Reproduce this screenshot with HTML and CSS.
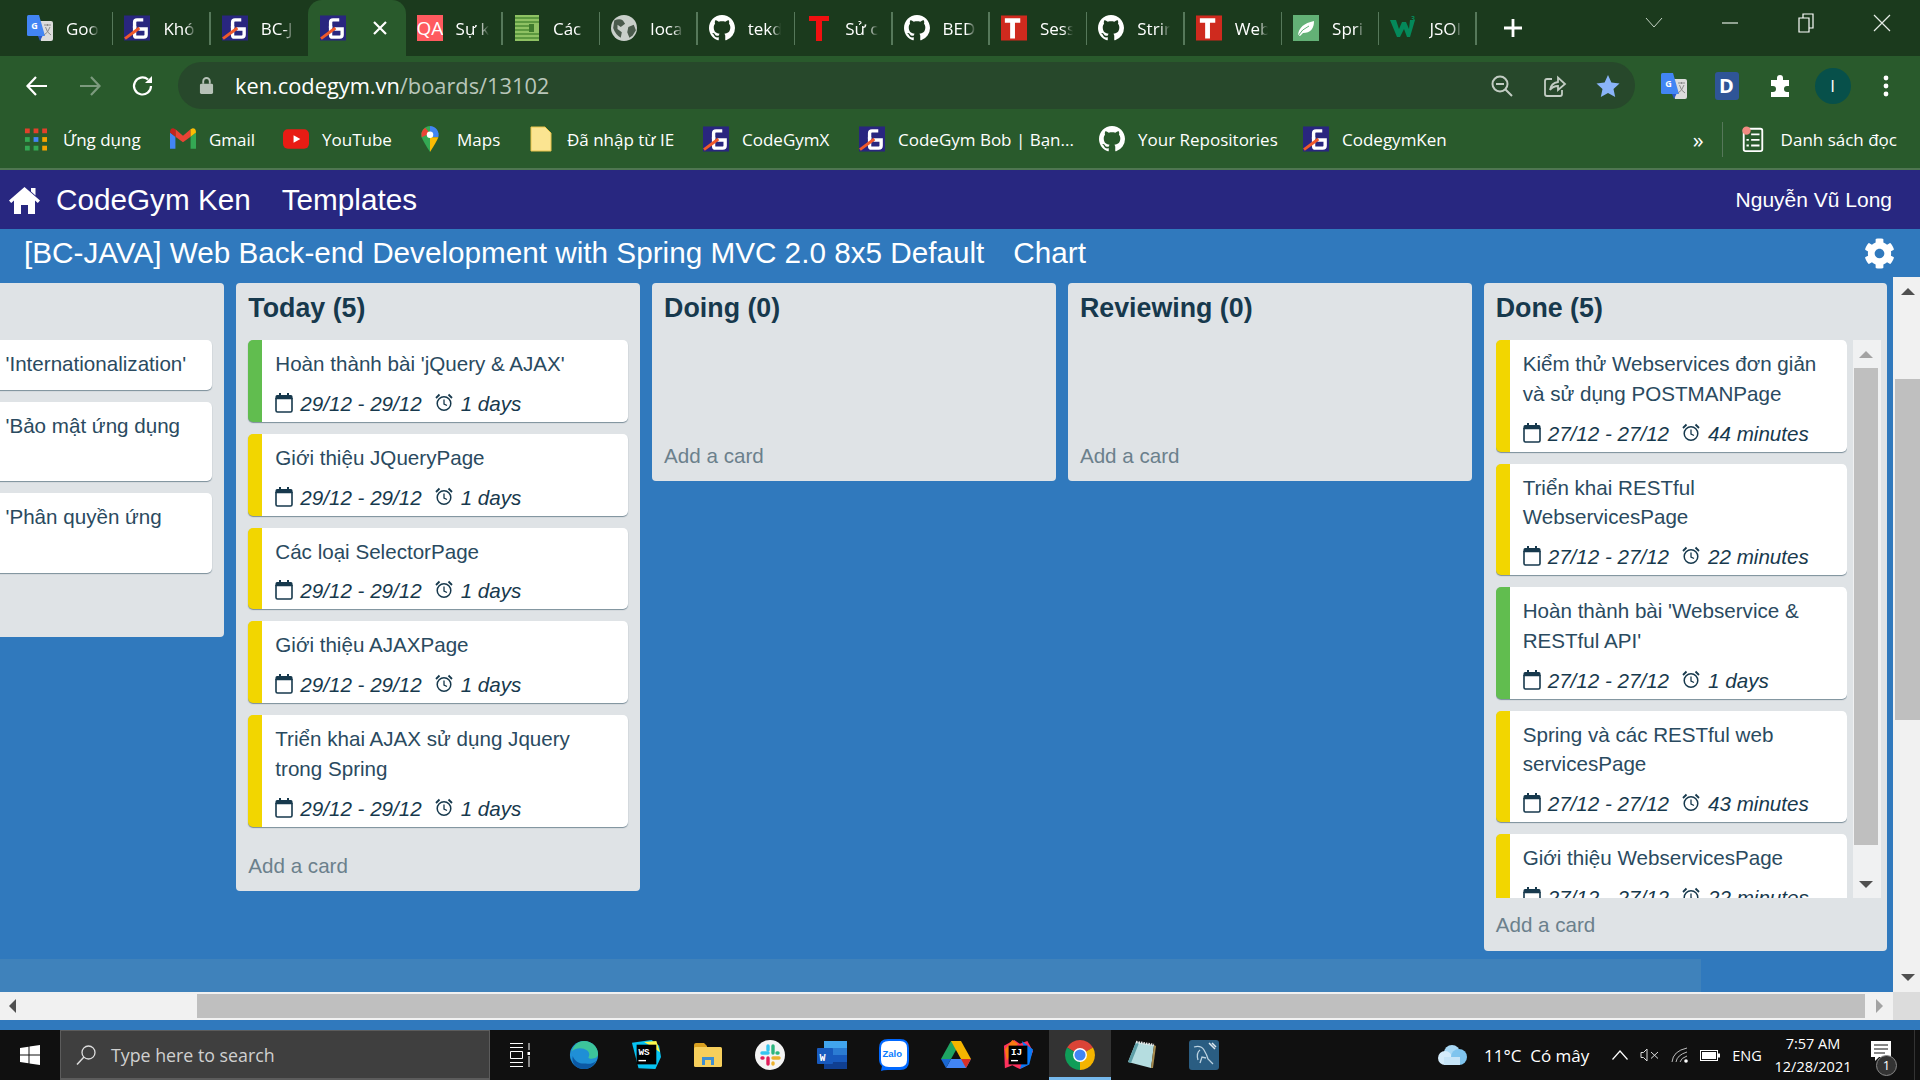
FILE: index.html
```html
<!doctype html>
<html>
<head>
	<meta charset="utf-8">
	<title>CodeGym Ken</title>
	<link rel="stylesheet" href="styles.css">
</head>
<body>
<svg class="defs" xmlns="http://www.w3.org/2000/svg">
	<symbol id="i-cg" viewBox="0 0 27 26">
		<rect width="27" height="26" fill="#29267f"/>
		<path d="M20 4.5H13.5Q11 4.500 11 7V13" fill="none" stroke="#fff" stroke-width="3.500"/>
		<path d="M11 11V20.500Q11 22.500 13 22.500H20.500Q23 22.500 23 20V14H15" fill="none" stroke="#fff" stroke-width="3.500"/>
		<path d="M1 24L16 13" stroke="#f0592a" stroke-width="3"/>
	</symbol>
	<symbol id="i-gh" viewBox="0 0 16 16">
		<path fill="#fff" d="M8 0C3.58 0 0 3.58 0 8c0 3.54 2.29 6.53 5.47 7.59.4.07.55-.17.55-.38 0-.19-.01-.82-.01-1.49-2.01.37-2.53-.49-2.69-.94-.09-.23-.48-.94-.82-1.13-.28-.15-.68-.52-.01-.53.63-.01 1.08.58 1.23.82.72 1.21 1.87.87 2.33.66.07-.52.28-.87.51-1.07-1.78-.2-3.64-.89-3.64-3.95 0-.87.31-1.59.82-2.15-.08-.2-.36-1.02.08-2.12 0 0 .67-.21 2.2.82.64-.18 1.32-.27 2-.27.68 0 1.36.09 2 .27 1.53-1.04 2.2-.82 2.2-.82.44 1.1.16 1.92.08 2.12.51.56.82 1.27.82 2.15 0 3.07-1.87 3.75-3.65 3.95.29.25.54.73.54 1.48 0 1.07-.01 1.93-.01 2.2 0 .21.15.46.55.38A8.013 8.013 0 0016 8c0-4.42-3.58-8-8-8z"/>
	</symbol>
	<symbol id="i-translate" viewBox="0 0 26 26">
		<path d="M9 6H24Q26 6 26 8V24Q26 26 24 26H14Z" fill="#dcdcdc"/>
		<path d="M1.500 0H12L18 21H1.500Q0 21 0 19.500V1.500Q0 0 1.500 0Z" fill="#4285f4"/>
		<path d="M11 21H15.500L13 26Z" fill="#2a56c6"/>
		<text x="7.500" y="14" class="glyph-g" fill="#fff">G</text>
		<path d="M17 10H24M20.500 9V11M18.500 12Q20 18 24 20M23 12Q21 18 17 20" fill="none" stroke="#8a8a8a" stroke-width="1"/>
	</symbol>
	<symbol id="i-globe" viewBox="0 0 24 24">
		<circle cx="12" cy="12" r="12" fill="#c9cfca"/>
		<path d="M3 5Q8 3 11 5L13 8 9 11 6 9 6 13 10 16 9 21Q4 18 2 12ZM16 11L21 9 23 14 20 19 17 21 15 16Z" fill="#4a5a4c"/>
	</symbol>
	<symbol id="i-t" viewBox="0 0 27 26">
		<rect width="27" height="26" fill="#cf2a1e"/>
		<path d="M4 3H20V7.500H14.500V24H9.500V7.500H4Z" fill="#fff"/>
	</symbol>
	<symbol id="i-home" viewBox="0 0 31 27">
		<path fill="#fff" d="M15.500 0L31 13.500 28.800 16 26 13.600V27H19V18H12V27H5V13.600L2.200 16 0 13.500ZM22 1H26.500V8.500L22 4.600Z"/>
	</symbol>
	<symbol id="i-gear" viewBox="0 0 512 512">
		<path fill="#fff" d="M487.400 315.700l-42.600-24.600c4.300-23.200 4.300-47 0-70.200l42.600-24.600c4.900-2.800 7.100-8.600 5.500-14-11.100-35.600-30-67.800-54.700-94.600-3.800-4.100-10-5.100-14.800-2.300L380.800 110c-17.900-15.400-38.500-27.300-60.800-35.100V25.800c0-5.600-3.900-10.500-9.400-11.700-36.700-8.200-74.300-7.800-109.200 0-5.500 1.200-9.400 6.100-9.400 11.700V75c-22.200 7.900-42.800 19.800-60.800 35.100L88.700 85.500c-4.900-2.800-11-1.900-14.800 2.300-24.700 26.700-43.600 58.900-54.700 94.600-1.700 5.400.6 11.200 5.500 14L67.300 221c-4.300 23.200-4.300 47 0 70.200l-42.600 24.600c-4.900 2.800-7.100 8.600-5.500 14 11.100 35.600 30 67.800 54.700 94.600 3.800 4.100 10 5.100 14.800 2.300l42.600-24.600c17.900 15.400 38.500 27.300 60.800 35.100v49.200c0 5.600 3.900 10.500 9.400 11.700 36.700 8.200 74.300 7.800 109.200 0 5.500-1.200 9.400-6.100 9.400-11.700v-49.200c22.200-7.900 42.800-19.800 60.800-35.100l42.600 24.600c4.900 2.800 11 1.900 14.800-2.300 24.700-26.700 43.600-58.900 54.700-94.600 1.500-5.500-.7-11.300-5.600-14.100zM256 336c-44.100 0-80-35.900-80-80s35.900-80 80-80 80 35.900 80 80-35.900 80-80 80z"/>
	</symbol>
	<symbol id="i-cal" viewBox="0 0 18 20">
		<path d="M1 5.500H17V17.500Q17 19 15.500 19H2.500Q1 19 1 17.500Z" fill="none" stroke="#17394d" stroke-width="1.600"/>
		<path d="M0.500 3.500Q0.500 2 2 2H4V0H6V2H12V0H14V2H16Q17.500 2 17.500 3.500V6H0.500Z" fill="#17394d"/>
	</symbol>
	<symbol id="i-clock" viewBox="0 0 18 19">
		<circle cx="9" cy="10.500" r="6.800" fill="none" stroke="#17394d" stroke-width="1.500"/>
		<path d="M9 6.500V11L12 12.500" fill="none" stroke="#17394d" stroke-width="1.300"/>
		<path d="M1 5L4.500 1.500M17 5L13.500 1.500" stroke="#17394d" stroke-width="1.800"/>
	</symbol>
	<symbol id="i-chrome" viewBox="0 0 28 28">
		<path d="M14 14L26.100 7A14 14 0 0 0 1.900 7Z" fill="#db4437"/>
		<path d="M14 14L1.900 7A14 14 0 0 0 14 28Z" fill="#0f9d58"/>
		<path d="M14 14L14 28A14 14 0 0 0 26.100 7Z" fill="#f4b400"/>
		<circle cx="14" cy="14" r="6.500" fill="#fff"/>
		<circle cx="14" cy="14" r="5.200" fill="#4285f4"/>
	</symbol>
</svg>

<div class="chrome">
	<div class="tabs">
		<div class="tab"><svg class="fav"><use href="#i-translate"/></svg><span class="tab-label">Goo</span></div>
		<div class="tab"><svg class="fav"><use href="#i-cg"/></svg><span class="tab-label">Khó</span></div>
		<div class="tab tab-before-active"><svg class="fav"><use href="#i-cg"/></svg><span class="tab-label">BC-J</span></div>
		<div class="tab tab-active"><svg class="fav"><use href="#i-cg"/></svg>
			<svg class="tab-close" viewBox="0 0 14 14"><path d="M1 1L13 13M13 1L1 13" stroke="#fff" stroke-width="2.200"/></svg>
		</div>
		<div class="tab"><span class="fav fav-qa">QA</span><span class="tab-label">Sự k</span></div>
		<div class="tab"><svg class="fav" viewBox="0 0 24 26"><rect width="24" height="26" fill="#8fc163"/><path d="M0 3H24M0 7H24M0 11H14M0 15H14M0 19H24M0 23H24" stroke="#4c8a35" stroke-width="1.500"/><path d="M14 9H19V17H14Z" fill="#3f7a2d"/></svg><span class="tab-label">Các</span></div>
		<div class="tab"><svg class="fav"><use href="#i-globe"/></svg><span class="tab-label">loca</span></div>
		<div class="tab"><svg class="fav"><use href="#i-gh"/></svg><span class="tab-label">tekd</span></div>
		<div class="tab"><svg class="fav" viewBox="0 0 26 26"><path d="M3 1H23V6H16V26H10V6H3Z" fill="#f01010"/></svg><span class="tab-label">Sử c</span></div>
		<div class="tab"><svg class="fav"><use href="#i-gh"/></svg><span class="tab-label">BED</span></div>
		<div class="tab"><svg class="fav"><use href="#i-t"/></svg><span class="tab-label">Sess</span></div>
		<div class="tab"><svg class="fav"><use href="#i-gh"/></svg><span class="tab-label">Strir</span></div>
		<div class="tab"><svg class="fav"><use href="#i-t"/></svg><span class="tab-label">Web</span></div>
		<div class="tab"><svg class="fav" viewBox="0 0 26 26"><rect width="26" height="26" fill="#63b176"/><path d="M5 20Q6 9 21 6Q21 18 10 18L7 21Z" fill="#fff"/><path d="M5 21Q9 14 16 11" stroke="#63b176" stroke-width="1" fill="none"/></svg><span class="tab-label">Spri</span></div>
		<div class="tab"><svg class="fav" viewBox="0 0 26 26"><path d="M0 5H6L9 14 12 7H16L19 14 20 5H25L20 22H17L14 14 10 22H7Z" fill="#04895a"/><text x="21" y="6" class="glyph-sup" fill="#04895a">3</text></svg><span class="tab-label">JSOI</span></div>
		<svg class="tab-plus" viewBox="0 0 20 20"><path d="M10 1V19M1 10H19" stroke="#fff" stroke-width="2.800"/></svg>
		<div class="win-controls">
			<svg viewBox="0 0 18 20"><path d="M1 5L9 14 17 5" fill="none" stroke="#c4d2c4" stroke-width="1"/></svg>
			<svg viewBox="0 0 18 20"><path d="M1 10H17" stroke="#e0e8e0" stroke-width="1.200"/></svg>
			<svg viewBox="0 0 18 20"><path d="M2 5H12V19H2ZM6 5V1H16V15H12" fill="none" stroke="#fff" stroke-width="1.200"/></svg>
			<svg viewBox="0 0 18 20"><path d="M1 2L17 18M17 2L1 18" stroke="#e6ece6" stroke-width="1.200"/></svg>
		</div>
	</div>

	<div class="toolbar">
		<span class="tool"><svg viewBox="0 0 24 24" class="tool-ico"><path d="M22 12H3M11 3L2.500 12 11 21" fill="none" stroke="#fff" stroke-width="2.200"/></svg></span>
		<span class="tool"><svg viewBox="0 0 24 24" class="tool-ico"><path d="M2 12H21M13 3L21.500 12 13 21" fill="none" stroke="#7c9a7e" stroke-width="2.200"/></svg></span>
		<span class="tool"><svg viewBox="0 0 24 24" class="tool-ico"><path d="M20 12A8.500 8.500 0 1 1 17 5.500" fill="none" stroke="#fff" stroke-width="2.200"/><path d="M21 2V9H14Z" fill="#fff"/></svg></span>
		<div class="omnibox">
			<svg class="lock" viewBox="0 0 16 20"><path d="M4.500 8V5.500a3.500 3.500 0 0 1 7 0V8" fill="none" stroke="#b7c2b8" stroke-width="2"/><rect x="1" y="8" width="14" height="11" rx="1.500" fill="#b7c2b8"/></svg>
			<span class="url">ken.codegym.vn<span class="url-path">/boards/13102</span></span>
			<div class="omni-tools">
				<span class="tool"><svg viewBox="0 0 24 24" class="tool-ico"><circle cx="10" cy="10" r="7.500" fill="none" stroke="#c2ccc3" stroke-width="2"/><path d="M6 10H14M15.500 15.500L22 22" stroke="#c2ccc3" stroke-width="2" fill="none"/></svg></span>
				<span class="tool"><svg viewBox="0 0 24 24" class="tool-ico"><path d="M9 5H4Q2 5 2 7V20Q2 22 4 22H17Q19 22 19 20V16" fill="none" stroke="#c2ccc3" stroke-width="1.800"/><path d="M7 16Q8 9 15 8V3.500L22 10 15 16V12Q10 12 7 16Z" fill="none" stroke="#c2ccc3" stroke-width="1.800"/></svg></span>
				<span class="tool"><svg viewBox="0 0 24 24" class="tool-ico"><path d="M12 1L15.400 8.500 23.500 9.500 17.500 15 19.200 23 12 19 4.800 23 6.500 15 .5 9.500 8.600 8.500Z" fill="#8ab4f8"/></svg></span>
			</div>
		</div>
		<span class="tool tool-first"><svg class="tool-ext"><use href="#i-translate"/></svg></span>
		<span class="tool"><span class="ext-d">D</span></span>
		<span class="tool"><svg viewBox="0 0 24 24" class="tool-ico"><path d="M9 4a3 3 0 0 1 6 0V6H21V12H19a3 3 0 0 0 0 6H21V23H3V18H5a3 3 0 0 0 0-6H3V6H9Z" fill="#fff"/></svg></span>
		<span class="tool"><span class="avatar">I</span></span>
		<span class="tool"><svg viewBox="0 0 6 24" class="tool-dots"><circle cx="3" cy="4" r="2.400" fill="#fff"/><circle cx="3" cy="12" r="2.400" fill="#fff"/><circle cx="3" cy="20" r="2.400" fill="#fff"/></svg></span>
	</div>

	<div class="bookmarks">
		<div class="bm-list">
			<a class="bm"><svg class="bm-ico bm-ico-apps" viewBox="0 0 24 24"><path d="M1 1H6V6H1ZM10 1H15V6H10ZM19 1H24V6H19Z" fill="#e2402b"/><path d="M1 10H6V15H1Z" fill="#34a853"/><path d="M10 10H15V15H10Z" fill="#4285f4"/><path d="M19 10H24V15H19Z" fill="#f4a300"/><path d="M1 19H6V24H1ZM10 19H15V24H10Z" fill="#34a853"/><path d="M19 19H24V24H19Z" fill="#f4a300"/></svg>Ứng dụng</a>
			<a class="bm"><svg class="bm-ico" viewBox="0 0 24 20"><path d="M0 4V19H5V8Z" fill="#4285f4"/><path d="M19 8V19H24V4Z" fill="#34a853"/><path d="M5 8L12 13 19 8V1L12 7 5 1Z" fill="#ea4335"/><path d="M0 4L5 8V1L3 0Q0 0 0 4Z" fill="#c5221f"/><path d="M24 4L19 8V1L21 0Q24 0 24 4Z" fill="#fbbc04"/></svg>Gmail</a>
			<a class="bm"><svg class="bm-ico" viewBox="0 0 27 20"><rect width="27" height="20" rx="5" fill="#e81c14"/><path d="M11 6L18 10 11 14Z" fill="#fff"/></svg>YouTube</a>
			<a class="bm"><svg class="bm-ico bm-ico-map" viewBox="0 0 20 28"><path d="M10 28Q3 17 1 12A9.500 9.500 0 0 1 10 0Z" fill="#34a853"/><path d="M10 0A9.500 9.500 0 0 1 19 12L10 12Z" fill="#4285f4"/><path d="M10 28Q17 17 19 12L10 12Z" fill="#fbbc04"/><path d="M1 12A9.500 9.500 0 0 1 5 2L10 8Z" fill="#ea4335"/><circle cx="10" cy="9.500" r="3.500" fill="#fff"/></svg>Maps</a>
			<a class="bm"><svg class="bm-ico" viewBox="0 0 22 26"><path d="M1 1H15L21 7V25H1Z" fill="#fbe491" stroke="#e9c34b" stroke-width="1"/></svg>Đã nhập từ IE</a>
			<a class="bm"><svg class="bm-ico"><use href="#i-cg"/></svg>CodeGymX</a>
			<a class="bm"><svg class="bm-ico"><use href="#i-cg"/></svg>CodeGym Bob | Bạn...</a>
			<a class="bm"><svg class="bm-ico"><use href="#i-gh"/></svg>Your Repositories</a>
			<a class="bm"><svg class="bm-ico"><use href="#i-cg"/></svg>CodegymKen</a>
		</div>
		<span class="bm-more">»</span>
		<a class="bm bm-reading"><svg class="bm-ico" viewBox="0 0 24 28"><rect x="2" y="3" width="20" height="24" rx="2" fill="none" stroke="#fff" stroke-width="2"/><path d="M10 9H19M10 15H19M10 21H19M5 15H7.500M5 21H7.500" stroke="#fff" stroke-width="2"/><circle cx="5" cy="5" r="4.500" fill="#f28b82"/></svg>Danh sách đọc</a>
	</div>
</div>

<nav class="topnav">
	<svg class="home-ico"><use href="#i-home"/></svg>
	<a class="topnav-link">CodeGym Ken</a>
	<a class="topnav-link">Templates</a>
	<span class="topnav-user">Nguyễn Vũ Long</span>
</nav>

<div class="board">
	<header class="board-head">
		<h1 class="board-title">[BC-JAVA] Web Back-end Development with Spring MVC 2.0 8x5 Default</h1>
		<a class="board-chart">Chart</a>
		<svg class="gear"><use href="#i-gear"/></svg>
	</header>

	<div class="board-body">
		<div class="board-main">
			<div class="lists">
				<section class="list">
					<div class="list-title"></div>
					<div class="cards">
						<article class="card card-plain"><p class="card-title">'Internationalization'</p></article>
						<article class="card card-plain card-tall"><p class="card-title">'Bảo mật ứng dụng</p></article>
						<article class="card card-plain card-tall"><p class="card-title">'Phân quyền ứng</p></article>
					</div>
					<div class="add-card"></div>
				</section>

				<section class="list">
					<h2 class="list-title">Today (5)</h2>
					<div class="cards">
						<article class="card card-green">
							<p class="card-title">Hoàn thành bài 'jQuery &amp; AJAX'</p>
							<div class="card-meta"><svg class="ico-cal"><use href="#i-cal"/></svg><span>29/12 - 29/12</span><svg class="ico-clock"><use href="#i-clock"/></svg><span>1 days</span></div>
						</article>
						<article class="card">
							<p class="card-title">Giới thiệu JQueryPage</p>
							<div class="card-meta"><svg class="ico-cal"><use href="#i-cal"/></svg><span>29/12 - 29/12</span><svg class="ico-clock"><use href="#i-clock"/></svg><span>1 days</span></div>
						</article>
						<article class="card">
							<p class="card-title">Các loại SelectorPage</p>
							<div class="card-meta"><svg class="ico-cal"><use href="#i-cal"/></svg><span>29/12 - 29/12</span><svg class="ico-clock"><use href="#i-clock"/></svg><span>1 days</span></div>
						</article>
						<article class="card">
							<p class="card-title">Giới thiệu AJAXPage</p>
							<div class="card-meta"><svg class="ico-cal"><use href="#i-cal"/></svg><span>29/12 - 29/12</span><svg class="ico-clock"><use href="#i-clock"/></svg><span>1 days</span></div>
						</article>
						<article class="card">
							<p class="card-title">Triển khai AJAX sử dụng Jquery trong Spring</p>
							<div class="card-meta"><svg class="ico-cal"><use href="#i-cal"/></svg><span>29/12 - 29/12</span><svg class="ico-clock"><use href="#i-clock"/></svg><span>1 days</span></div>
						</article>
					</div>
					<div class="add-card">Add a card</div>
				</section>

				<section class="list">
					<h2 class="list-title">Doing (0)</h2>
					<div class="cards cards-empty"></div>
					<div class="add-card">Add a card</div>
				</section>

				<section class="list">
					<h2 class="list-title">Reviewing (0)</h2>
					<div class="cards cards-empty"></div>
					<div class="add-card">Add a card</div>
				</section>

				<section class="list">
					<h2 class="list-title">Done (5)</h2>
					<div class="list-scroll">
						<div class="cards cards-clip">
							<article class="card">
								<p class="card-title">Kiểm thử Webservices đơn giản và sử dụng POSTMANPage</p>
								<div class="card-meta"><svg class="ico-cal"><use href="#i-cal"/></svg><span>27/12 - 27/12</span><svg class="ico-clock"><use href="#i-clock"/></svg><span>44 minutes</span></div>
							</article>
							<article class="card">
								<p class="card-title">Triển khai RESTful WebservicesPage</p>
								<div class="card-meta"><svg class="ico-cal"><use href="#i-cal"/></svg><span>27/12 - 27/12</span><svg class="ico-clock"><use href="#i-clock"/></svg><span>22 minutes</span></div>
							</article>
							<article class="card card-green">
								<p class="card-title">Hoàn thành bài 'Webservice &amp; RESTful API'</p>
								<div class="card-meta"><svg class="ico-cal"><use href="#i-cal"/></svg><span>27/12 - 27/12</span><svg class="ico-clock"><use href="#i-clock"/></svg><span>1 days</span></div>
							</article>
							<article class="card">
								<p class="card-title">Spring và các RESTful web servicesPage</p>
								<div class="card-meta"><svg class="ico-cal"><use href="#i-cal"/></svg><span>27/12 - 27/12</span><svg class="ico-clock"><use href="#i-clock"/></svg><span>43 minutes</span></div>
							</article>
							<article class="card">
								<p class="card-title">Giới thiệu WebservicesPage</p>
								<div class="card-meta"><svg class="ico-cal"><use href="#i-cal"/></svg><span>27/12 - 27/12</span><svg class="ico-clock"><use href="#i-clock"/></svg><span>22 minutes</span></div>
							</article>
						</div>
						<div class="list-bar">
							<span class="arrow arrow-up arrow-dim"></span>
							<span class="list-thumb"></span>
							<span class="arrow arrow-down"></span>
						</div>
					</div>
					<div class="add-card">Add a card</div>
				</section>
			</div>
			<div class="board-strip"></div>
		</div>
		<div class="page-bar">
			<span class="arrow arrow-up"></span>
			<span class="page-thumb"></span>
			<span class="arrow arrow-down"></span>
		</div>
	</div>

	<div class="hbar">
		<span class="arrow arrow-left"></span>
		<span class="hbar-thumb"></span>
		<span class="arrow arrow-right"></span>
		<span class="hbar-corner"></span>
	</div>
</div>

<footer class="taskbar">
	<span class="start"><svg viewBox="0 0 20 20" class="start-ico"><path d="M0 3L8.500 1.800V9.500H0ZM9.500 1.600L20 0V9.500H9.500ZM0 10.500H8.500V18.200L0 17ZM9.500 10.500H20V20L9.500 18.400Z" fill="#fff"/></svg></span>
	<div class="search"><svg viewBox="0 0 20 20" class="search-ico"><circle cx="12.500" cy="7.500" r="6.500" fill="none" stroke="#ddd" stroke-width="1.300"/><path d="M8 12L1 19.500" stroke="#ddd" stroke-width="1.500"/></svg><span>Type here to search</span></div>
	<span class="task-view"><svg viewBox="0 0 20 24" class="task-view-ico"><path d="M0 .5H13M0 4.500H13M0 19.500H13M0 23.500H13M.5 8.500H12.500V15.500H.5Z M19 0V7M19 13V24" fill="none" stroke="#fff" stroke-width="1"/><rect x="17.500" y="9" width="3" height="3" fill="#fff"/></svg></span>
	<div class="task-apps">
		<span class="app"><svg viewBox="0 0 32 32" class="app-ico"><circle cx="16" cy="16" r="15" fill="#1f8fd6"/><path d="M3 12C5 5 10 1 16 1c9 0 15 7 15 14 0 3-3 5-7 5-2 0-4-1-3-2 1-2 1-5-2-7C15 8 7 8 3 12Z" fill="#3dc59b"/><path d="M16 31C8 31 2 25 4 17c2 6 8 9 14 8 4 1 8 0 11-3-2 5-7 9-13 9Z" fill="#0c59a4"/></svg></span>
		<span class="app"><svg viewBox="0 0 32 32" class="app-ico"><path d="M1 3L22 0 30 6 32 18 26 31 8 30Z" fill="#07c3f2"/><path d="M14 2L27 1 31 13 22 7Z" fill="#fcf84a"/><rect x="6" y="5" width="21" height="21" fill="#000"/><text x="8" y="16" class="glyph-app" fill="#fff">WS</text><path d="M8 22H16" stroke="#fff" stroke-width="1.500"/></svg></span>
		<span class="app"><svg viewBox="0 0 30 26" class="app-ico"><path d="M1 3Q1 1 3 1H11L14 4V8H1Z" fill="#d9a020"/><rect x="1" y="5" width="28" height="20" rx="1.500" fill="#f7cf5c"/><path d="M9 23V15H21V23H18V18H12V23Z" fill="#3f8fd2"/></svg></span>
		<span class="app"><svg viewBox="0 0 30 30" class="app-ico"><circle cx="15" cy="15" r="15" fill="#f4f4f4"/><path d="M7 13H13" stroke="#36c5f0" stroke-width="3.400" stroke-linecap="round"/><path d="M13 6V10" stroke="#36c5f0" stroke-width="3.400" stroke-linecap="round"/><path d="M18 6V13" stroke="#2eb67d" stroke-width="3.400" stroke-linecap="round"/><path d="M23 13H22" stroke="#2eb67d" stroke-width="3.400" stroke-linecap="round"/><path d="M18 18H24" stroke="#ecb22e" stroke-width="3.400" stroke-linecap="round"/><path d="M18 23V24" stroke="#ecb22e" stroke-width="3.400" stroke-linecap="round"/><path d="M13 18V24" stroke="#e01e5a" stroke-width="3.400" stroke-linecap="round"/><path d="M7 18H8" stroke="#e01e5a" stroke-width="3.400" stroke-linecap="round"/></svg></span>
		<span class="app"><svg viewBox="0 0 30 28" class="app-ico"><rect x="7" y="0" width="23" height="28" rx="1" fill="#2b7cd3"/><rect x="7" y="0" width="23" height="7" fill="#41a5ee"/><rect x="7" y="14" width="23" height="7" fill="#185abd"/><rect x="7" y="21" width="23" height="7" fill="#103f91"/><rect x="0" y="7" width="16" height="16" rx="1" fill="#185abd"/><text x="2.500" y="20" class="glyph-app" fill="#fff">W</text></svg></span>
		<span class="app"><svg viewBox="0 0 30 32" class="app-ico"><path d="M9 0H21Q30 0 30 9V22Q30 31 21 31H9Q4 31 2 32L3 27Q0 25 0 20V9Q0 0 9 0Z" fill="#0068ff"/><path d="M10 2H21Q28 2 28 9V21Q28 28 21 28H10Q2 28 2 21V9Q2 2 10 2Z" fill="#fff"/><text x="3.500" y="18" class="glyph-zalo" fill="#0a7cff">Zalo</text></svg></span>
		<span class="app"><svg viewBox="0 0 30 28" class="app-ico"><path d="M10 0H20L10 18H0Z" fill="#1ea362"/><path d="M10 0H20L30 18H20Z" fill="#f4b400"/><path d="M5 27L10 18H30L25 27Z" fill="#4285f4"/><path d="M0 18L5 27 10 18Z" fill="#1967d2"/><path d="M25 27L30 18H20Z" fill="#d93025"/></svg></span>
		<span class="app"><svg viewBox="0 0 32 32" class="app-ico"><path d="M1 6L12 0 18 4 26 1 32 12 26 27 18 31 10 27 2 30Z" fill="#fe315d"/><path d="M20 1L32 10 28 26 18 31 24 12Z" fill="#087cfa"/><path d="M2 10L10 0 16 4 4 22Z" fill="#f97a12"/><rect x="6" y="6" width="20" height="20" fill="#000"/><text x="8.500" y="16.500" class="glyph-app" fill="#fff">IJ</text><path d="M8.500 22H16" stroke="#fff" stroke-width="1.500"/></svg></span>
		<span class="app app-active"><svg class="app-ico"><use href="#i-chrome"/></svg></span>
		<span class="app"><svg viewBox="0 0 30 30" class="app-ico"><path d="M9 2L27 5 24 28 1 22Z" fill="#b5dde0"/><path d="M1 22L9 2 12 3 4 23Z" fill="#5d9ea6"/><path d="M27 5L29 6 26 28 24 28Z" fill="#a88c4f"/><path d="M9 2L27 5" stroke="#e8e8e8" stroke-width="2.500" stroke-dasharray="1.500 1"/></svg></span>
		<span class="app"><svg viewBox="0 0 30 30" class="app-ico"><rect width="30" height="30" rx="3" fill="#2a5d82"/><path d="M5 7Q12 5 15 10 18 15 19 19L24 24M17 18L13 17 11 23M11 10Q7 13 9 20" fill="none" stroke="#bcd2e0" stroke-width="1.300"/><path d="M20 3L26 9M23 3L27 7" stroke="#dfe8ee" stroke-width="1.500"/></svg></span>
	</div>
	<div class="tray">
		<span class="tray-cell tray-left"><svg viewBox="0 0 30 22" class="weather"><circle cx="15" cy="9" r="8" fill="#a8d8f5"/><circle cx="8" cy="14" r="7" fill="#d5ecfb"/><circle cx="22" cy="13" r="8" fill="#7fc4ee"/><rect x="7" y="13" width="16" height="8" fill="#c6e4f7"/></svg></span>
		<span class="tray-cell tray-weather">11°C&nbsp; Có mây</span>
		<span class="tray-cell"><svg viewBox="0 0 16 10" class="tray-chev"><path d="M.5 9.500L8 1 15.500 9.500" fill="none" stroke="#fff" stroke-width="1.200"/></svg></span>
		<span class="tray-cell"><svg viewBox="0 0 20 14" class="tray-speak"><path d="M1 4.500H3.500L7 1V13L3.500 9.500H1Z" fill="none" stroke="#ddd" stroke-width="1"/><path d="M11 4L18 10.500M18 4L11 10.500" stroke="#ddd" stroke-width="1"/></svg></span>
		<span class="tray-cell"><svg viewBox="0 0 18 16" class="tray-wifi"><path d="M1 15Q2 4 16 1M5 15Q6 8 16 5M9 15Q10 11 16 9" fill="none" stroke="#bbb" stroke-width="1"/><circle cx="15" cy="14" r="1.800" fill="#fff"/></svg></span>
		<span class="tray-cell"><svg viewBox="0 0 20 11" class="tray-batt"><rect x=".5" y=".5" width="17" height="10" fill="none" stroke="#fff"/><rect x="2" y="2" width="14" height="7" fill="#fff"/><rect x="18" y="3.500" width="2" height="4" fill="#fff"/></svg></span>
		<span class="tray-cell tray-lang">ENG</span>
		<span class="tray-cell tray-clock"><span>7:57 AM</span><span>12/28/2021</span></span>
		<span class="tray-cell tray-notify">
			<svg viewBox="0 0 20 20" class="notify-ico"><path d="M0 0H20V16H8L4 20V16H0Z" fill="#fff"/><path d="M3 4H17M3 8H17M3 12H14" stroke="#111" stroke-width="1.200"/></svg>
			<span class="notify-badge">1</span>
		</span>
	</div>
</footer>
</body>
</html>
```

FILE: styles.css
```css
* {
	box-sizing: border-box;
}
html, body {
	margin: 0;
	height: 1080px;
	overflow: hidden;
}
body {
	font-family: "Liberation Sans", Arial, sans-serif;
	display: flex;
	flex-direction: column;
	background: #3079bd;
}
.defs {
	position: absolute;
	width: 0;
	height: 0;
}
.glyph-g {
	font: 700 9px "Open Sans", sans-serif;
	text-anchor: middle;
}
.glyph-sup {
	font: 700 7px "Open Sans", sans-serif;
}
.glyph-app {
	font: 700 10px "Liberation Mono", monospace;
}
.glyph-zalo {
	font: 700 9.500px "Liberation Sans", sans-serif;
}

/* browser */
.chrome {
	flex: none;
	height: 170px;
	background: #295a2c;
	font-family: "Open Sans", sans-serif;
	color: #fff;
	border-bottom: 2px solid #4f7651;
}
.tabs {
	display: flex;
	align-items: center;
	height: 56px;
	padding-left: 16px;
	background: #1b3a1d;
}
.tab {
	position: relative;
	display: flex;
	align-items: center;
	flex: none;
	width: 97.400px;
	height: 56px;
	padding-left: 11px;
	font-size: 17px;
}
.tab::after {
	content: "";
	position: absolute;
	right: 0;
	top: 12px;
	height: 33px;
	width: 1.500px;
	background: #56785a;
}
.tab-before-active::after, .tab-active::after {
	display: none;
}
.tab-active {
	background: #295a2c;
	border-radius: 14px 14px 0 0;
	padding-left: 12px;
}
.fav {
	flex: none;
	width: 26px;
	height: 26px;
	margin-right: 13px;
}
.fav-qa {
	background: #ff5a5f;
	color: #fff;
	font: 19px/26px "Open Sans", sans-serif;
	text-align: center;
	overflow: hidden;
}
.tab-label {
	width: 33px;
	overflow: hidden;
	white-space: nowrap;
	-webkit-mask-image: linear-gradient(to right, #000 70%, transparent);
	mask-image: linear-gradient(to right, #000 70%, transparent);
}
.tab-close {
	width: 14px;
	height: 14px;
	margin-left: 14px;
}
.tab-plus {
	flex: none;
	width: 20px;
	height: 20px;
	margin-left: 26px;
}
.win-controls {
	display: flex;
	align-items: center;
	gap: 58px;
	margin-left: auto;
	padding-right: 29px;
	height: 46px;
	align-self: flex-start;
}
.win-controls svg {
	width: 18px;
	height: 20px;
}
.toolbar {
	display: flex;
	align-items: center;
	height: 56px;
	padding: 3px 0 0 10px;
}
.tool {
	flex: none;
	width: 53px;
	display: flex;
	align-items: center;
	justify-content: center;
}
.tool-first {
	margin-left: 12px;
}
.tool-ico {
	width: 24px;
	height: 24px;
}
.tool-ext {
	width: 26px;
	height: 26px;
}
.tool-dots {
	width: 6px;
	height: 24px;
}
.ext-d {
	width: 24px;
	height: 28px;
	background: #2f5597;
	border-radius: 3px;
	font: 700 20px/28px "Open Sans", sans-serif;
	text-align: center;
}
.avatar {
	width: 36px;
	height: 36px;
	border-radius: 50%;
	background: #07504a;
	font: 17px/36px "Open Sans", sans-serif;
	text-align: center;
}
.omnibox {
	flex: none;
	display: flex;
	align-items: center;
	width: 1457px;
	height: 47px;
	margin-left: 9px;
	padding: 0 1px 0 21px;
	border-radius: 24px;
	background: #27482b;
}
.lock {
	width: 15px;
	height: 19px;
	margin-right: 21px;
}
.url {
	font-size: 21.800px;
}
.url-path {
	color: #b9c6ba;
}
.omni-tools {
	display: flex;
	margin-left: auto;
}
.bookmarks {
	display: flex;
	align-items: center;
	height: 54px;
	padding-left: 24px;
	font-size: 17px;
}
.bm-list {
	display: grid;
	grid-template-columns: 146px 113px 134px 111px 175px 156px 240px 204px 150px;
}
.bm {
	display: flex;
	align-items: center;
	white-space: nowrap;
}
.bm-ico {
	flex: none;
	width: 26px;
	height: 26px;
	margin-right: 13px;
}
.bm-ico-apps {
	width: 23px;
	margin-right: 16px;
}
.bm-ico-map {
	margin-right: 14px;
}
.bm-more {
	margin-left: auto;
	font-size: 22px;
	margin-right: 18px;
}
.bm-reading {
	padding-left: 17px;
	padding-right: 23px;
	height: 35px;
	border-left: 1px solid #56785a;
}
.bm-reading .bm-ico {
	margin-right: 15px;
}

/* app nav */
.topnav {
	flex: none;
	display: flex;
	align-items: center;
	height: 59px;
	padding: 1px 28px 0 9px;
	background: #282780;
	color: #fff;
}
.home-ico {
	width: 31px;
	height: 27px;
	margin-right: 16px;
}
.topnav-link {
	font-size: 29.700px;
	margin-right: 31px;
}
.topnav-user {
	margin-left: auto;
	font-size: 21px;
}

/* board */
.board {
	flex: none;
	height: 801px;
	display: flex;
	flex-direction: column;
	background: #3079bd;
	color: #fff;
}
.board-head {
	flex: none;
	display: flex;
	align-items: center;
	height: 48px;
	padding: 0 25px 0 24px;
}
.board-title {
	margin: 0;
	font-size: 29.700px;
	font-weight: 400;
}
.board-chart {
	margin-left: 29px;
	font-size: 29.700px;
}
.gear {
	width: 31px;
	height: 31px;
	margin-left: auto;
}
.board-body {
	flex: none;
	display: flex;
	height: 715px;
}
.board-main {
	flex: 1;
	min-width: 0;
	display: flex;
	flex-direction: column;
	overflow: hidden;
}
.lists {
	flex: 1;
	display: flex;
	align-items: flex-start;
	gap: 12px;
	margin-left: -179.500px;
	padding-top: 6px;
}
.board-strip {
	flex: none;
	width: 1701px;
	height: 33px;
	background: #3f82bb;
}
.list {
	flex: none;
	width: 403.800px;
	border-radius: 4px;
	background: #dfe3e6;
	color: #17394d;
}
.list-title {
	margin: 0;
	height: 57px;
	padding: 8px 12px 0;
	font-size: 26.800px;
	line-height: 34px;
}
.cards {
	padding: 0 12px;
}
.cards-empty {
	height: 88.500px;
}
.list-scroll {
	display: flex;
	height: 558px;
	padding: 0 6px 0 12px;
}
.cards-clip {
	flex: 1;
	min-width: 0;
	padding: 0;
	overflow: hidden;
}
.add-card {
	height: 52.500px;
	padding: 13px 12px 0;
	font-size: 20.600px;
	line-height: 28px;
	color: #6b808c;
}
.card {
	margin-bottom: 12px;
	padding: 0 12px 0 13px;
	border-left: 14px solid #f2d600;
	border-radius: 5px;
	background: #fff;
	box-shadow: 0 1px 1px rgba(23, 57, 77, 0.5);
}
.card-green {
	border-left-color: #61bd4f;
}
.card-plain {
	border-left-color: #fff;
	padding-left: 159px;
	white-space: nowrap;
}
.card-plain .card-title {
	padding-bottom: 11px;
}
.card-tall .card-title {
	padding-bottom: 40.750px;
}
.card-title {
	margin: 0;
	padding: 9px 0 10px;
	font-size: 20.600px;
	line-height: 29.750px;
	color: #2a4a60;
}
.card-meta {
	display: flex;
	height: 33px;
	font-size: 20.600px;
	font-style: italic;
	line-height: 30px;
	white-space: nowrap;
}
.ico-cal {
	flex: none;
	width: 18px;
	height: 20px;
	margin: 4px 7px 0 0;
}
.ico-clock {
	flex: none;
	width: 18px;
	height: 19px;
	margin: 4px 8px 0 13px;
}

/* fake scrollbars, the page is a picture of them */
.arrow {
	flex: none;
	display: block;
	width: 0;
	height: 0;
	border: 0 solid transparent;
}
.arrow-up {
	border-width: 0 7px 7px;
	border-bottom-color: #505050;
}
.arrow-down {
	border-width: 7px 7px 0;
	border-top-color: #505050;
}
.arrow-left {
	border-width: 7px 7px 7px 0;
	border-right-color: #505050;
}
.arrow-right {
	border-width: 7px 0 7px 7px;
	border-left-color: #a3a3a3;
}
.arrow-dim {
	border-bottom-color: #a3a3a3;
}
.list-bar {
	flex: none;
	display: flex;
	flex-direction: column;
	align-items: center;
	width: 28px;
	margin-left: 6px;
	padding: 11px 2px 6px 0;
	background: #f0f1f2;
}
.list-thumb {
	flex: none;
	width: 24px;
	height: 477px;
	margin: 10px 0 36px;
	background: #bfbfbf;
}
.page-bar {
	flex: none;
	display: flex;
	flex-direction: column;
	align-items: center;
	width: 27px;
	padding: 11px 0 0 2px;
	background: #f1f1f1;
}
.page-thumb {
	flex: none;
	width: 25px;
	height: 341px;
	margin: 84px 0 254px;
	background: #bfbfbf;
}
.hbar {
	flex: none;
	display: flex;
	align-items: center;
	height: 28px;
	padding-left: 9px;
	background: #f1f1f1;
}
.hbar-thumb {
	flex: none;
	width: 1668px;
	height: 24px;
	margin: 0 11px 0 181px;
	background: #bfbfbf;
}
.hbar-corner {
	flex: none;
	align-self: stretch;
	width: 27px;
	margin-left: auto;
	background: #dcdcdc;
}

/* windows taskbar */
.taskbar {
	flex: none;
	display: flex;
	height: 50px;
	background: #101010;
	color: #fff;
	font-family: "Open Sans", sans-serif;
}
.start {
	flex: none;
	width: 60px;
	display: flex;
	align-items: center;
	justify-content: center;
}
.start-ico {
	width: 20px;
	height: 20px;
}
.search {
	flex: none;
	display: flex;
	align-items: center;
	width: 430px;
	padding-left: 15px;
	background: #3f3f3f;
	border: 1px solid #5c5c5c;
	border-bottom-width: 2px;
	color: #d0d0d0;
	font-size: 17.800px;
}
.search-ico {
	width: 20px;
	height: 20px;
	margin-right: 15px;
}
.task-view {
	flex: none;
	width: 63px;
	display: flex;
	align-items: center;
	padding-left: 20px;
}
.task-view-ico {
	width: 20px;
	height: 24px;
}
.task-apps {
	display: flex;
}
.app {
	flex: none;
	width: 62px;
	display: flex;
	align-items: center;
	justify-content: center;
}
.app-active {
	background: #333;
	border-bottom: 3px solid #76b9ed;
	padding-top: 3px;
}
.app-ico {
	width: 30px;
	height: 32px;
}
.tray {
	display: grid;
	grid-template-columns: 47px 120px 32px 28px 32px 28px 46px 86px 59px;
	margin-left: auto;
	padding-right: 5px;
	font-size: 15px;
}
.tray-cell {
	display: flex;
	align-items: center;
	justify-content: center;
}
.tray-left {
	justify-content: flex-start;
}
.tray-weather {
	justify-content: flex-start;
	font-size: 17px;
	white-space: nowrap;
}
.weather {
	width: 30px;
	height: 22px;
}
.tray-chev {
	width: 16px;
	height: 10px;
}
.tray-speak {
	width: 20px;
	height: 14px;
}
.tray-wifi {
	width: 18px;
	height: 16px;
}
.tray-batt {
	width: 20px;
	height: 11px;
}
.tray-lang {
	font-size: 14.500px;
}
.tray-clock {
	flex-direction: column;
	gap: 3px;
	font-size: 14.500px;
	white-space: nowrap;
	line-height: 20px;
}
.tray-notify {
	position: relative;
	border-right: 1px solid #333;
}
.notify-ico {
	width: 20px;
	height: 20px;
	margin-right: 8px;
	margin-top: -8px;
}
.notify-badge {
	position: absolute;
	right: 17px;
	top: 25px;
	width: 21px;
	height: 21px;
	border-radius: 50%;
	border: 1px solid #888;
	background: #333;
	font-size: 13px;
	line-height: 19px;
	text-align: center;
}
```
